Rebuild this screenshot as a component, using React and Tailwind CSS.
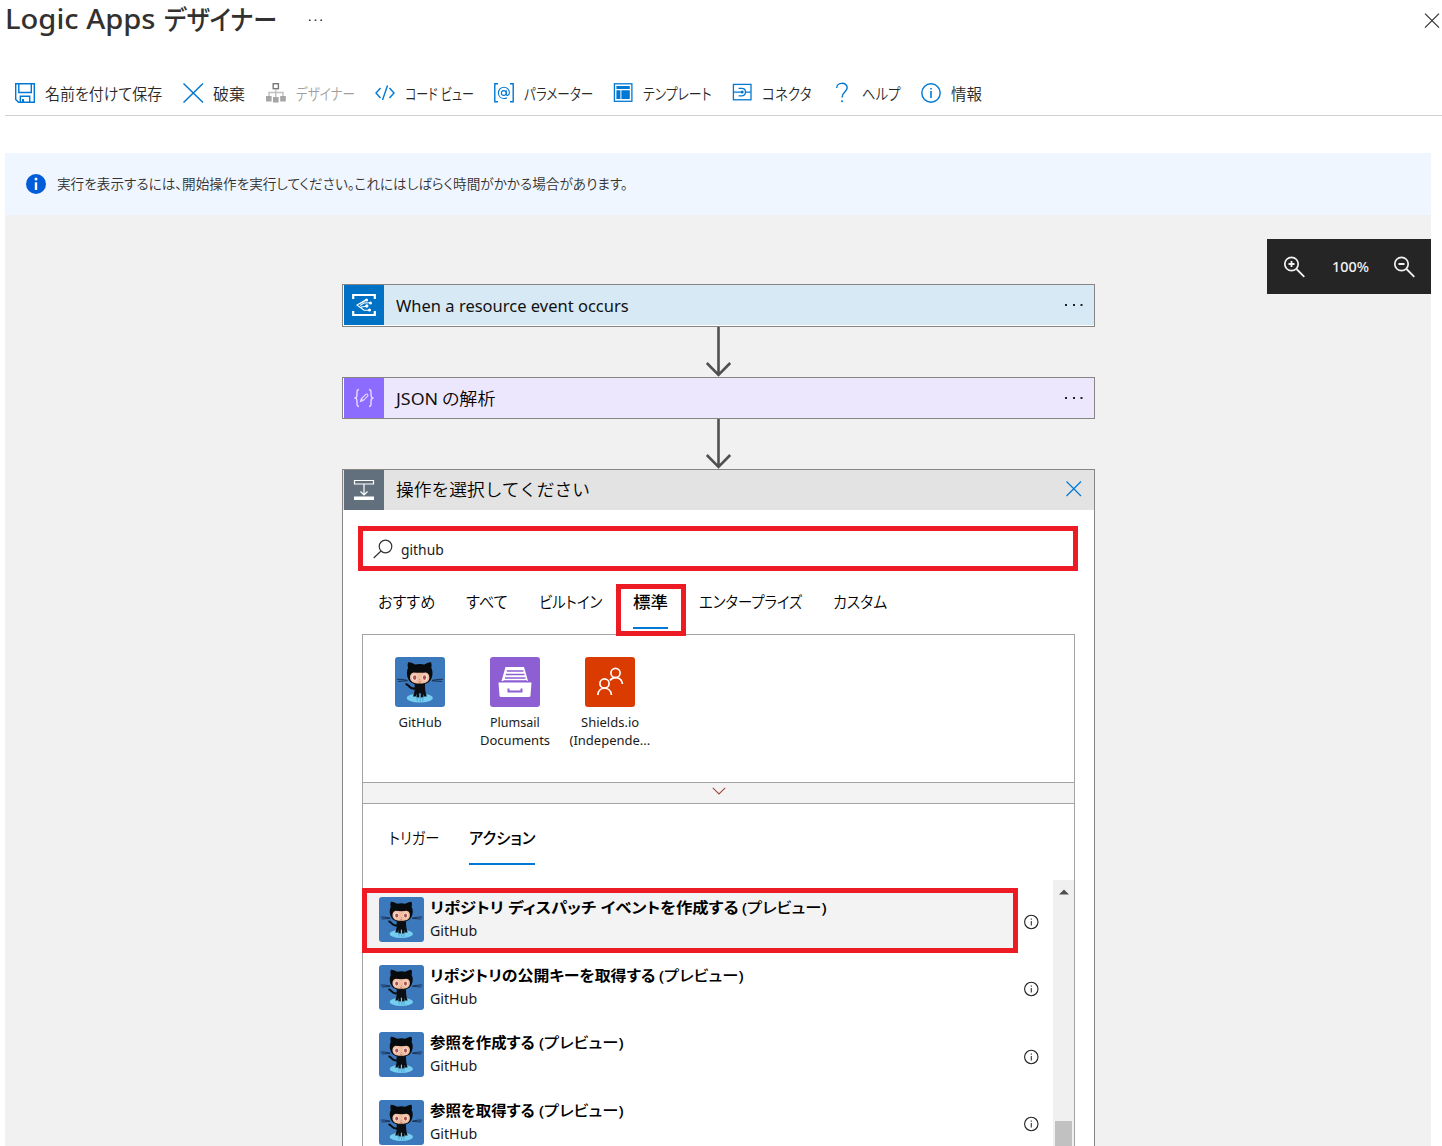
import React, { useLayoutEffect, useRef, useState } from "react";

// A single line of text condensed or widened to a given width.
function Fit({ w, className = "", children }) {
  const ref = useRef(null);
  const [scale, setScale] = useState(1);
  useLayoutEffect(() => {
    if (ref.current) setScale(w / ref.current.offsetWidth);
  }, [w]);
  return (
    <span className={"block shrink-0 whitespace-nowrap " + className} style={{ width: w }}>
      <span ref={ref} className="inline-block origin-left whitespace-pre" style={{ transform: `scaleX(${scale})` }}>
        {children}
      </span>
    </span>
  );
}

const BLUE = "#0078d4";

function Svg({ w = 22, h = 22, children, className = "" }) {
  return (
    <svg width={w} height={h} viewBox={`0 0 ${w} ${h}`} fill="none" className={"shrink-0 " + className}>
      {children}
    </svg>
  );
}

const SaveIcon = () => (
  <Svg>
    <g stroke={BLUE} strokeWidth="1.4">
      <path d="M.7 1.7H19.3V20.3H3.5L.7 17.5Z" />
      <path d="M3.8 1.7V10.5H16.3V1.7M5.3 20V14.3H14.7V20" />
      <path d="M8 17V20" strokeWidth="2" />
    </g>
  </Svg>
);
const DiscardIcon = () => (
  <Svg><path d="M.5 1.5 20 20.5M20 1.5.5 20.5" stroke={BLUE} strokeWidth="1.5" /></Svg>
);
const DesignerIcon = () => (
  <Svg>
    <rect x="7.2" y="1.7" width="5.2" height="5" stroke="#777" strokeWidth="1.4" />
    <path d="M9.8 7V15M3 14V10.5H17V14" stroke="#c0c0c0" strokeWidth="1.4" />
    <path d="M0 14H5.6V19.5H0ZM7 15H12.6V20.5H7ZM14.2 14H19.8V19.5H14.2Z" fill="#a6a6a6" />
  </Svg>
);
const CodeIcon = () => (
  <Svg><path d="M5.5 6 1 11l4.5 5M14.5 6l4.5 5-4.5 5M12.5 3.5 7.5 18" stroke={BLUE} strokeWidth="1.4" /></Svg>
);
const ParamIcon = () => (
  <Svg>
    <path d="M4 1.7H.8V19.7H4M16 1.7H19.2V19.7H16" stroke={BLUE} strokeWidth="1.4" />
    <circle cx="9.8" cy="11" r="2.4" stroke={BLUE} strokeWidth="1.1" />
    <path d="M12.3 8.3V12C12.3 14.3 15.4 13.8 15.4 10.5C15.4 7.5 13 5.3 10 5.3C6.8 5.3 4.4 7.8 4.4 11C4.4 14.2 6.8 16.5 10 16.5C11.2 16.5 12.2 16.2 13 15.7" stroke={BLUE} strokeWidth="1.1" />
  </Svg>
);
const TemplateIcon = () => (
  <Svg>
    <rect x="1.4" y="1.8" width="17.5" height="17.5" stroke={BLUE} strokeWidth="1.3" />
    <path d="M3.4 4H16.8V7H3.4ZM3.4 8.2H7.4V17H3.4ZM8.4 8.2H16.8V17H8.4Z" fill={BLUE} />
  </Svg>
);
const ConnectorIcon = () => (
  <Svg>
    <rect x="1.4" y="2.4" width="17.6" height="15.4" stroke={BLUE} strokeWidth="1.3" />
    <path d="M1.6 10.1H9.1M13.6 10.1H18.6M6.6 6.3H9.6C14.8 6.3 14.8 13.9 9.6 13.9H6.6" stroke={BLUE} strokeWidth="1.3" />
    <circle cx="10.2" cy="10.1" r="1.5" fill={BLUE} />
  </Svg>
);
const HelpIcon = () => (
  <Svg>
    <path d="M4.7 6C4.7 -.2 15.2 -.2 15.2 5.8C15.2 9.5 10 10.5 10 15.5" stroke={BLUE} strokeWidth="1.4" />
    <circle cx="10" cy="19.2" r="1" fill={BLUE} />
  </Svg>
);
const InfoIcon = () => (
  <Svg>
    <circle cx="10" cy="11" r="9.2" stroke={BLUE} strokeWidth="1.4" />
    <path d="M10 9V16M10 6V7.6" stroke={BLUE} strokeWidth="1.6" />
  </Svg>
);

const tools = [
  ["名前を付けて保存", SaveIcon, "w-[168px]", 117],
  ["破棄", DiscardIcon, "w-[83px]", 32],
  ["デザイナー", DesignerIcon, "w-[109px]", 59],
  ["コード ビュー", CodeIcon, "w-[119px]", 69],
  ["パラメーター", ParamIcon, "w-[119px]", 69],
  ["テンプレート", TemplateIcon, "w-[119px]", 69],
  ["コネクタ", ConnectorIcon, "w-[100px]", 49],
  ["ヘルプ", HelpIcon, "w-[89px]", 38],
  ["情報", InfoIcon, "w-[70px]", 31],
];

function Octocat({ size }) {
  return (
    <svg width={size} height={size} viewBox="0 0 50 50" className="shrink-0 rounded-[3px]">
      <rect width="50" height="50" fill="#3c78bc" />
      <ellipse cx="24.8" cy="41" rx="13" ry="4.6" fill="#75cef0" />
      <path d="M2 22.3H6L12.5 23.4M3 24.4 12.5 23.8M48 22.3H44L37 23.4M47 24.4 37 23.8" stroke="#17304f" strokeWidth="1" fill="none" />
      <path d="M10.5 27C15 27.4 13.5 32.8 20.5 31.4" stroke="#0b0f14" strokeWidth="2.2" fill="none" />
      <path d="M19.5 27H30C30 32 30.2 35 31.8 39.5H29L28.4 36.5V40.5H25.6V36H24.3V40.5H21.5V36.5L20.8 39.5H18C19.8 35 20 32 19.5 27Z" fill="#0b0f14" />
      <path d="M22.2 40V44M25.2 40.5V45M27.8 40V44.5" stroke="#4fa4d6" strokeWidth="1" />
      <path d="M13.2 5.2C15.5 5 18.5 6.4 20 7.5C23 6.7 26.5 6.7 29.5 7.5C31 6.4 34 5 36 5.2C37 7.5 36.6 9.5 36.2 10.8C38 13.5 37.8 18.5 36.4 21.5C34.3 26.3 30 27.6 24.7 27.6C19.4 27.6 15 26.3 13 21.5C11.6 18.5 11.4 13.5 13.1 10.8C12.6 9.5 12.3 7.5 13.2 5.2Z" fill="#080b0e" />
      <path d="M18.5 15.4C22 15.9 27.4 15.9 30.9 15.4C34.7 16 35 21 33.6 23.4C32 26 28.5 26.5 24.7 26.5C20.9 26.5 17.4 26 15.8 23.4C14.4 21 14.7 16 18.5 15.4Z" fill="#f2bea2" />
      <ellipse cx="19.5" cy="20.4" rx="2.5" ry="3.2" fill="#fbe9e0" />
      <ellipse cx="29.7" cy="20.4" rx="2.5" ry="3.2" fill="#fbe9e0" />
      <ellipse cx="19.7" cy="20.6" rx="1.7" ry="2.4" fill="#ad5250" />
      <ellipse cx="29.5" cy="20.6" rx="1.7" ry="2.4" fill="#ad5250" />
      <path d="M23.6 24.7Q24.7 25.4 25.8 24.7M24.3 22.7H25.1" stroke="#a8564c" strokeWidth=".7" fill="none" />
    </svg>
  );
}

const Dots = () => (
  <Svg w={22} h={4}><path d="M1 1H3V3H1ZM9 1H11V3H9ZM16.5 1H18.5V3H16.5Z" fill="#222" /></Svg>
);

const Arrow = ({ h }) => (
  <svg width="28" height={h} viewBox={`0 0 28 ${h}`} fill="none" className="ml-[362px] block">
    <path d={`M14.5 0V${h - 2}M2.8 ${h - 14}L14.5 ${h - 2.2}L26.2 ${h - 14}`} stroke="#505050" strokeWidth="2.6" />
  </svg>
);

const rows = [
  ["リポジトリ ディスパッチ イベントを作成する", 308],
  ["リポジトリの公開キーを取得する", 225],
  ["参照を作成する", 105],
  ["参照を取得する", 105],
];

function Row({ title, w, first }) {
  return (
    <div className="flex h-[67.5px]">
      <div
        className={
          "-ml-px flex h-[65px] w-[656px] shrink-0 pr-2 " +
          (first ? "border-5 border-[#ed1c24] bg-[#f3f3f3] pt-1 pl-3" : "pt-[9px] pl-[17px]")
        }
      >
        <Octocat size={45} />
        <div className="-mt-px ml-1.5 flex flex-col">
          <div className="flex h-[22px] items-center text-[15px] leading-[22px]">
            <Fit w={w} className="font-bold">{title}</Fit>
            <Fit w={85} className="ml-1 font-medium">(プレビュー)</Fit>
          </div>
          <Fit w={47} className="h-[24px] text-[14.5px] leading-[24px] text-[#1a1a1a]">GitHub</Fit>
        </div>
      </div>
      <Svg w={16} h={16} className="mt-[25.5px] ml-[5px]">
        <circle cx="8.3" cy="8" r="6.7" stroke="#222" strokeWidth="1.1" />
        <path d="M8.3 7V11.5M8.3 4.5V5.8" stroke="#333" strokeWidth="1.1" />
      </Svg>
    </div>
  );
}

function Connector({ icon, lines }) {
  return (
    <div className="flex w-[95px] flex-col items-center">
      {icon}
      <div className="mt-1.5 flex flex-col items-center text-[13px] leading-[18px] text-[#1a1a1a]">
        {lines.map(([t, w]) => <Fit key={t} w={w}>{t}</Fit>)}
      </div>
    </div>
  );
}

export default function App() {
  return (
    <div className="h-[1146px] w-[1442px] overflow-hidden bg-white font-['Noto_Sans','Noto_Sans_CJK_JP',sans-serif] text-black [font-feature-settings:'palt']">
      <header className="flex h-[70px] items-start pl-[5px]">
        <div className="flex h-[38px] items-center text-[27px] leading-[38px] font-medium text-[#323130]">
          <Fit w={151}>Logic Apps</Fit>
          <Fit w={113} className="-mt-[3px] ml-[7.5px] font-['Noto_Sans_CJK_JP'] text-[27.5px] leading-[34px]">デザイナー</Fit>
        </div>
        <Svg w={16} h={4} className="mt-[18px] ml-[31.5px]">
          <path d="M1 1.5H2.6V3H1ZM6.7 1.5H8.3V3H6.7ZM12.4 1.5H14V3H12.4Z" fill="#323130" />
        </Svg>
        <Svg w={16} h={16} className="mt-[13px] ml-auto mr-[2px]">
          <path d="M1 .7 15 14.7M15 .7 1 14.7" stroke="#323130" strokeWidth="1.2" />
        </Svg>
      </header>

      <nav className="ml-[5px] flex h-[46px] border-b border-[#d2d0ce] pl-2.5 text-[15.5px] text-[#292827]">
        {tools.map(([label, Icon, width, w]) => (
          <div key={label} className={"flex h-[46px] shrink-0 items-center gap-2 " + width}>
            <Icon />
            <Fit w={w} className={"mt-px font-[350] leading-[22px] " + (label === "デザイナー" ? "text-[#a19f9d]" : "")}>{label}</Fit>
          </div>
        ))}
      </nav>

      <div className="mt-[37px] mr-[11px] ml-[5px] flex h-[62px] items-center bg-[#eff6ff] pl-[21px] text-[14px] text-[#323130]">
        <Svg w={20} h={20}>
          <circle cx="10" cy="10" r="10" fill="#015cda" />
          <path d="M10 8.3V16" stroke="#fff" strokeWidth="2.4" />
          <circle cx="10" cy="5" r="1.5" fill="#fff" />
        </Svg>
        <Fit w={571} className="-mt-[2px] ml-[11px] font-[350]">実行を表示するには、開始操作を実行してください。これにはしばらく時間がかかる場合があります。</Fit>
      </div>

      <main className="relative mr-[11px] ml-[5px] h-[931px] bg-[#f1f1f1] pt-[69px] pl-[337px]">
        <div className="absolute top-[24px] right-0 flex h-[55px] w-[164px] items-center bg-[#252525] text-[14px] text-[#f3f3f3]">
          <Svg w={24} h={24} className="ml-4">
            <circle cx="8.5" cy="9" r="6.7" stroke="#f3f3f3" strokeWidth="1.7" />
            <path d="M13.5 14 21.3 21.8M8.5 6V12M5.5 9H11.5" stroke="#f3f3f3" strokeWidth="1.8" />
          </Svg>
          <Fit w={37} className="ml-[25px] font-medium">100%</Fit>
          <Svg w={24} h={24} className="ml-6">
            <circle cx="8.5" cy="9" r="6.7" stroke="#f3f3f3" strokeWidth="1.7" />
            <path d="M13.5 14 21.3 21.8M5.5 9H11.5" stroke="#f3f3f3" strokeWidth="1.8" />
          </Svg>
        </div>

        <div className="w-[753px]">
          <div className="flex h-[43px] items-start border border-[#878484] bg-white pl-px">
            <div className="flex h-10 w-full items-center bg-[#d7e9f5]">
              <div className="flex size-10 items-center justify-center bg-[#0072c6]">
                <Svg w={24} h={24}>
                  <path d="M1.2 6V2H22.8V6M1.2 18V22H22.8V18" stroke="#fff" strokeWidth="2.2" />
                  <path d="M14 6.8 5 12 12 17.2H17M8 10.5 15 6.8M8 12.5 12 10 18 9.8M9 14 15 13.2" stroke="#fff" strokeWidth="1.1" />
                  <g fill="#fff"><circle cx="14.5" cy="7" r="1.5" /><circle cx="18.5" cy="10" r="1.5" /><circle cx="14.8" cy="13" r="1.7" /><circle cx="17.5" cy="17" r="1.5" /></g>
                </Svg>
              </div>
              <Fit w={233} className="mt-0.5 ml-3 text-[17px] text-[#111]">When a resource event occurs</Fit>
              <div className="mr-[8.5px] ml-auto"><Dots /></div>
            </div>
          </div>
          <Arrow h={50} />
          <div className="flex h-[42px] items-start border border-[#878484] bg-white pl-px">
            <div className="flex h-10 w-full items-center bg-[#ede7fd]">
              <div className="flex size-10 items-center justify-center bg-[#8c6cff]">
                <Svg w={22} h={22}>
                  <path d="M6 2.5C3.5 2.5 4 5 4 7.5C4 10 3.5 11 1.5 11C3.5 11 4 12 4 14.5C4 17 3.5 19.5 6 19.5M16 2.5C18.5 2.5 18 5 18 7.5C18 10 18.5 11 20.5 11C18.5 11 18 12 18 14.5C18 17 18.5 19.5 16 19.5" stroke="#e4dcff" strokeWidth="1.4" />
                  <path d="M7.5 14.5 8.3 11.8 12.8 7.3C13.8 6.3 15.6 8.1 14.6 9.1L10.2 13.6ZM8.3 11.8 10.2 13.6" stroke="#e4dcff" strokeWidth="1.1" />
                </Svg>
              </div>
              <Fit w={42} className="mt-0.5 ml-3 text-[17px] text-[#111]">JSON</Fit>
              <Fit w={53} className="mt-px ml-1 text-[17px] font-[350]">の解析</Fit>
              <div className="mr-[8.5px] ml-auto"><Dots /></div>
            </div>
          </div>
          <Arrow h={50} />
          <section className="h-[690px] border border-[#878484] bg-white">
            <div className="flex h-10 items-center bg-[#e3e3e3] pl-px">
              <div className="flex size-10 items-center justify-center bg-[#62707e]">
                <Svg w={22} h={22}>
                  <path d="M1.5 1.5H20.5V5H1.5ZM11 5V16M7.5 12.5 11 16 14.5 12.5" stroke="#fff" strokeWidth="1.2" />
                  <path d="M1 17.5H21V21H1Z" fill="#fff" />
                </Svg>
              </div>
              <Fit w={194} className="ml-3 text-[17px] font-[350] [font-feature-settings:normal]">操作を選択してください</Fit>
              <Svg w={18} h={18} className="-mt-[2px] mr-[11px] ml-auto"><path d="M1.5 1.5 16 16M16 1.5 1.5 16" stroke={BLUE} strokeWidth="1.2" /></Svg>
            </div>

            <div className="mt-4 ml-[15px] flex h-[45px] w-[720px] items-center border-5 border-[#ed1c24] pl-2.5">
              <Svg w={20} h={20}><circle cx="12.5" cy="7.5" r="6.3" stroke="#333" strokeWidth="1.2" /><path d="M8 12 .7 19" stroke="#333" strokeWidth="1.2" /></Svg>
              <Fit w={43} className="mt-0.5 ml-2 text-[14.5px] text-[#1a1a1a]">github</Fit>
            </div>

            <div className="relative z-10 mt-[13px] flex h-[50px] pl-[35px] text-[16px] leading-[36px]">
              <Fit w={57} className="font-[350]">おすすめ</Fit>
              <Fit w={42} className="ml-[31px] font-[350]">すべて</Fit>
              <Fit w={63} className="ml-[31px] font-[350]">ビルトイン</Fit>
              <div className="ml-[14px] h-[52px] w-[70px] shrink-0 border-5 border-[#ed1c24] pl-3">
                <div className="-mt-[5px] h-[45px] w-[35px] border-b-2 border-[#0078d4]"><Fit w={35} className="font-medium">標準</Fit></div>
              </div>
              <Fit w={103} className="ml-[13px] font-[350]">エンタープライズ</Fit>
              <Fit w={54} className="ml-[31px] font-[350]">カスタム</Fit>
            </div>

            <div className="ml-[19px] h-[540px] w-[713px] border border-[#a3a3a3]">
              <div className="flex h-[147px] pt-[22px] pl-[9.5px]">
                <Connector icon={<Octocat size={50} />} lines={[["GitHub", 43]]} />
                <Connector
                  icon={
                    <Svg w={50} h={50} className="rounded-[3px]">
                      <rect width="50" height="50" fill="#8e5fd3" />
                      <path d="M15.5 10H34L38 24H11.5Z" fill="#fff" />
                      <path d="M16.8 14H33.5M15.8 17.5H34.5M15 21H35.5M13.5 24H37" stroke="#8e5fd3" strokeWidth="1.3" />
                      <path d="M8.5 25.5H41.5L40.5 38.5Q40.4 40 39 40H11Q9.6 40 9.5 38.5Z" fill="#fff" />
                      <path d="M18.5 31.5V34.5H31.5V31.5" stroke="#8e5fd3" strokeWidth="2" />
                    </Svg>
                  }
                  lines={[["Plumsail", 50], ["Documents", 70]]}
                />
                <Connector
                  icon={
                    <Svg w={50} h={50} className="rounded-[3px]">
                      <rect width="50" height="50" fill="#da3b01" />
                      <g stroke="#fff" strokeWidth="1.7">
                        <circle cx="30.5" cy="16" r="4.6" />
                        <circle cx="19.5" cy="26.5" r="4.6" />
                        <path d="M12.8 38C13.5 29 25.5 29 26.5 38M25 23.5C28 19 36.5 19.5 37.5 27" />
                      </g>
                    </Svg>
                  }
                  lines={[["Shields.io", 58], ["(Independe...", 81]]}
                />
              </div>
              <div className="flex h-[22px] justify-center border-y border-[#a3a3a3] bg-[#f3f3f3]">
                <Svg w={14} h={8} className="mt-[4px]"><path d="M.8 .8 7 7 13.2 .8" stroke="#a5483c" strokeWidth="1.1" /></Svg>
              </div>
              <div className="flex h-[76px] pt-4 pl-[26px] text-[16px] leading-[36px]">
                <Fit w={50} className="font-[350]">トリガー</Fit>
                <div className="ml-[30px] h-[45px] w-[66px] border-b-2 border-[#0078d4]"><Fit w={66} className="font-medium">アクション</Fit></div>
              </div>
              <div className="flex h-[290px]">
                <div className="w-[690px] pt-2">
                  {rows.map(([t, w], i) => <Row key={t} title={t} w={w} first={i === 0} />)}
                </div>
                <div className="flex w-[21px] flex-col items-center bg-[#f0f0f0]">
                  <Svg w={10} h={6} className="mt-[8.5px]"><path d="M0 5.5 5 .5 10 5.5Z" fill="#505050" /></Svg>
                  <div className="mt-[226.5px] h-[50px] w-[17px] bg-[#c1c1c1]" />
                </div>
              </div>
            </div>
          </section>
        </div>
      </main>
    </div>
  );
}
